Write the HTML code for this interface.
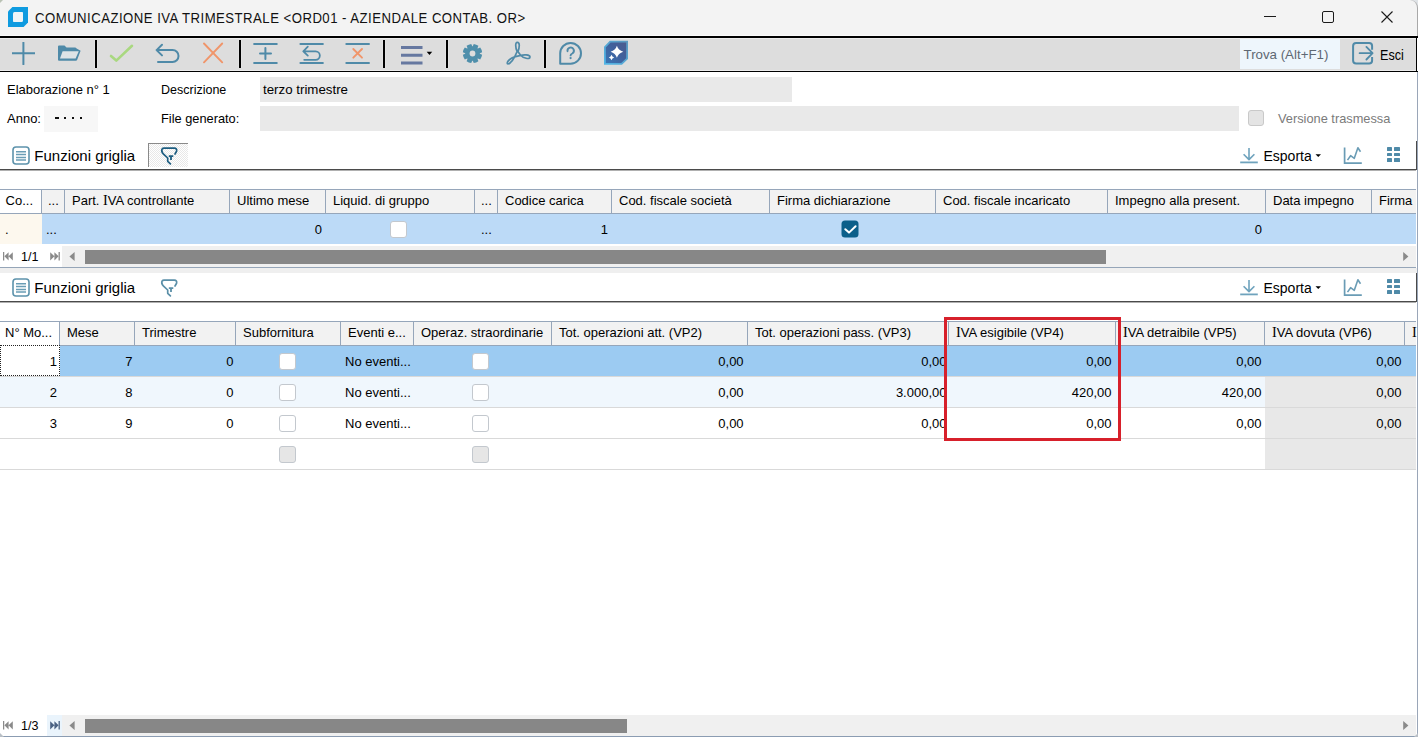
<!DOCTYPE html>
<html><head><meta charset="utf-8"><style>
html,body{margin:0;padding:0;}
body{width:1418px;height:737px;position:relative;overflow:hidden;background:#fff;font-family:"Liberation Sans",sans-serif;}
body>div{position:absolute;box-sizing:content-box;}
.t{white-space:nowrap;line-height:1;}
</style></head><body>
<div style="left:0px;top:0px;width:1418px;height:36px;background:#f3f3f3;"></div>
<div style="left:0px;top:35px;width:1418px;height:1px;background:#fafafa;"></div>
<svg style="position:absolute;left:8px;top:7px;" width="20" height="20" viewBox="0 0 20 20"><path d="M4.4 0H20V15.6L15.6 20H0V4.4Z" fill="#0f9be0"/><path d="M6.5 5H14.2Q15 5 15 5.8V13.5Q15 15 13.5 15H5.8Q5 15 5 14.2V6.5Q5 5 6.5 5Z" fill="#eef5f8"/></svg>
<div class="t" style="left:35.3px;top:10px;font-size:15.5px;color:#111;transform:scaleX(0.85);transform-origin:left top;letter-spacing:0.55px;">COMUNICAZIONE IVA TRIMESTRALE &lt;ORD01 - AZIENDALE CONTAB. OR&gt;</div>
<div style="left:1264px;top:16px;width:12px;height:1px;background:#1a1a1a;"></div>
<div style="left:1322px;top:11px;width:10px;height:10px;border:1px solid #1a1a1a;border-radius:2px;"></div>
<svg style="position:absolute;left:1381px;top:11px;" width="12" height="12" viewBox="0 0 12 12"><path d="M0.5 0.5L11.5 11.5M11.5 0.5L0.5 11.5" stroke="#1a1a1a" stroke-width="1.1"/></svg>
<div style="left:0px;top:36px;width:1418px;height:2px;background:#000;"></div>
<div style="left:0px;top:38px;width:1416px;height:1px;background:#ebebeb;"></div>
<div style="left:0px;top:39px;width:1416px;height:31px;background:#dddddd;"></div>
<div style="left:0px;top:70px;width:1416px;height:1px;background:#ebebeb;"></div>
<div style="left:0px;top:71px;width:1418px;height:1px;background:#000;"></div>
<div style="left:1416px;top:36px;width:1px;height:36px;background:#000;"></div>
<svg style="position:absolute;left:12px;top:42px;" width="23" height="23" viewBox="0 0 23 23"><path d="M11.4 0.5V22.3M0 11.2H22.8" stroke="#4f8aa8" stroke-width="2" stroke-linecap="round"/></svg>
<svg style="position:absolute;left:57px;top:45px;" width="25" height="17" viewBox="0 0 25 17"><path d="M1 1.6Q1 0.6 2 0.6H7.5L9.5 2.6H18Q19 2.6 19.6 3.4L23.6 5.8L20.2 14.8Q19.9 15.8 18.8 15.8H2Q1 15.8 1 14.8Z" fill="#4f8aa8"/><path d="M5.6 6.2H21.8L18.6 13.6H3Z" fill="#dde3e6"/></svg>
<div style="left:94px;top:40px;width:4px;height:28px;background:#e3e3e3;"></div>
<div style="left:95px;top:40px;width:2px;height:28px;background:#000;"></div>
<div style="left:238px;top:40px;width:4px;height:28px;background:#e3e3e3;"></div>
<div style="left:239px;top:40px;width:2px;height:28px;background:#000;"></div>
<div style="left:382px;top:40px;width:4px;height:28px;background:#e3e3e3;"></div>
<div style="left:383px;top:40px;width:2px;height:28px;background:#000;"></div>
<div style="left:445px;top:40px;width:4px;height:28px;background:#e3e3e3;"></div>
<div style="left:446px;top:40px;width:2px;height:28px;background:#000;"></div>
<div style="left:543px;top:40px;width:4px;height:28px;background:#e3e3e3;"></div>
<div style="left:544px;top:40px;width:2px;height:28px;background:#000;"></div>
<svg style="position:absolute;left:108px;top:43px;" width="26" height="21" viewBox="0 0 26 21"><path d="M3 13L8.3 17.6L24 2.8" stroke="#a9d880" stroke-width="2.6" fill="none" stroke-linecap="round" stroke-linejoin="round"/></svg>
<svg style="position:absolute;left:154px;top:43px;" width="28" height="22" viewBox="0 0 28 22"><path d="M8 1.8L2.6 7.1L8 12.4M2.6 7.1H18.6A5.9 5.9 0 0 1 18.6 18.9H4" stroke="#4f8aa8" stroke-width="2" fill="none" stroke-linecap="round" stroke-linejoin="round"/></svg>
<svg style="position:absolute;left:202px;top:42px;" width="22" height="22" viewBox="0 0 22 22"><path d="M2 1.5L20.2 20.3M20.2 1.5L2 20.3" stroke="#f0956a" stroke-width="1.9" stroke-linecap="round"/></svg>
<svg style="position:absolute;left:253px;top:42px;" width="26" height="24" viewBox="0 0 26 24"><path d="M1.2 2H23.7M1.2 21H23.7" stroke="#4f8aa8" stroke-width="2.2" stroke-linecap="round"/><path d="M12.4 6V17M7 11.4H18" stroke="#4f8aa8" stroke-width="2" stroke-linecap="round"/></svg>
<svg style="position:absolute;left:299px;top:42px;" width="26" height="24" viewBox="0 0 26 24"><path d="M1.5 2H23.8M1.5 21H23.8" stroke="#4f8aa8" stroke-width="2.2" stroke-linecap="round"/><path d="M8.8 4.7L4.3 9.3L8.8 13.6M4.3 9.3H16.6A4.2 4.2 0 0 1 16.6 17.8H5.2" stroke="#4f8aa8" stroke-width="1.8" fill="none" stroke-linecap="round" stroke-linejoin="round"/></svg>
<svg style="position:absolute;left:345px;top:42px;" width="26" height="24" viewBox="0 0 26 24"><path d="M1.4 2H23.9M1.4 21H23.9" stroke="#4f8aa8" stroke-width="2.2" stroke-linecap="round"/><path d="M8.3 7L17 15.7M17 7L8.3 15.7" stroke="#f0956a" stroke-width="1.9" stroke-linecap="round"/></svg>
<svg style="position:absolute;left:399px;top:44px;" width="36" height="22" viewBox="0 0 36 22"><path d="M2 3.5H23.5M2 11.3H23.5M2 19H23.5" stroke="#6678a0" stroke-width="3" stroke-linecap="butt"/><path d="M27.7 7.8H33.2L30.45 10.9Z" fill="#000"/></svg>
<svg style="position:absolute;left:462px;top:43px;" width="21" height="21" viewBox="0 0 21 21"><path d="M11.77 0.88A9.7 9.7 0 0 1 16.40 2.80L15.48 5.16L15.84 5.52L18.20 4.60A9.7 9.7 0 0 1 20.12 9.23L17.80 10.25L17.80 10.75L20.12 11.77A9.7 9.7 0 0 1 18.20 16.40L15.84 15.48L15.48 15.84L16.40 18.20A9.7 9.7 0 0 1 11.77 20.12L10.75 17.80L10.25 17.80L9.23 20.12A9.7 9.7 0 0 1 4.60 18.20L5.52 15.84L5.16 15.48L2.80 16.40A9.7 9.7 0 0 1 0.88 11.77L3.20 10.75L3.20 10.25L0.88 9.23A9.7 9.7 0 0 1 2.80 4.60L5.16 5.52L5.52 5.16L4.60 2.80A9.7 9.7 0 0 1 9.23 0.88L10.25 3.20L10.75 3.20Z" fill="#4f8fab"/><circle cx="10.5" cy="10.5" r="2.9" fill="#dddddd"/></svg>
<svg style="position:absolute;left:500px;top:38px;" width="34" height="30" viewBox="0 0 34 30"><path d="M14.8 18.7L17.1 13.5C15.4 9.6 15 4.3 17.4 4.3C19.8 4.3 19.8 9 17.9 13.6L20.6 17.2C23 20 30 22 30 19.1C30 16.2 23 16.6 20.8 17.4L14.6 18.8C10.6 20.2 7.2 23.2 7.2 25C7.2 27.2 11.4 25.4 14.8 18.7Z" stroke="#4f8aa8" stroke-width="1.7" fill="none" stroke-linejoin="round"/></svg>
<svg style="position:absolute;left:557px;top:41px;" width="26" height="25" viewBox="0 0 26 25"><path d="M3.2 22.7V12.3A10.4 10.4 0 1 1 13.6 22.7Z" stroke="#4f8aa8" stroke-width="2" fill="none" stroke-linejoin="round"/><path d="M10.5 10.2A3.2 3.2 0 1 1 15.3 12.5Q13.6 13.3 13.6 14.4" stroke="#4f8aa8" stroke-width="1.9" fill="none" stroke-linecap="round"/><circle cx="13.6" cy="17.1" r="1.15" fill="#4f8aa8"/></svg>
<svg style="position:absolute;left:603px;top:40px;" width="26" height="26" viewBox="0 0 26 26"><defs><linearGradient id="g1" x1="0" y1="1" x2="1" y2="0"><stop offset="0" stop-color="#3a78b8"/><stop offset="0.55" stop-color="#41609c"/><stop offset="1" stop-color="#4d5a8c"/></linearGradient><linearGradient id="g2" x1="0" y1="1" x2="1" y2="0"><stop offset="0" stop-color="#52b6e6"/><stop offset="1" stop-color="#5b98c0"/></linearGradient></defs><path d="M7.2 1.7H24.1V18.6L18.6 23.9H1.9V7.2Z" fill="url(#g1)" stroke="url(#g2)" stroke-width="1.8"/><path d="M13.9 5.7Q15.3 10.3 20.3 11.7Q15.3 13.1 13.9 17.8Q12.5 13.1 7.6 11.7Q12.5 10.3 13.9 5.7Z" fill="#fff"/><path d="M8.5 14.8Q9.1 16.9 11.2 17.5Q9.1 18.1 8.5 20.2Q7.9 18.1 5.8 17.5Q7.9 16.9 8.5 14.8Z" fill="#fff"/></svg>
<div style="left:1240px;top:39px;width:100px;height:30px;background:#eef6fc;"></div>
<div class="t" style="left:1243.5px;top:48px;font-size:13.3px;color:#5e6873;">Trova (Alt+F1)</div>
<svg style="position:absolute;left:1350px;top:41px;" width="26" height="25" viewBox="0 0 26 25"><path d="M22.1 8.7V5.1Q22.1 2.1 19.1 2.1H6.1Q3.1 2.1 3.1 5.1V19.5Q3.1 22.5 6.1 22.5H19.1Q22.1 22.5 22.1 19.5V16.1" stroke="#4f8aa8" stroke-width="2" fill="none"/><path d="M9.6 12.2H22M16.4 5.9L22.6 12.2L16.4 18.5" stroke="#4f8aa8" stroke-width="1.8" fill="none" stroke-linecap="round" stroke-linejoin="round"/></svg>
<div class="t" style="left:1379.5px;top:47px;font-size:15px;color:#000;transform:scaleX(0.84);transform-origin:left top;">Esci</div>
<div class="t" style="left:7px;top:83px;font-size:13px;color:#000;">Elaborazione n° 1</div>
<div class="t" style="left:161px;top:84px;font-size:12.5px;color:#000;">Descrizione</div>
<div style="left:260px;top:77px;width:532px;height:25px;background:#e9e9e9;"></div>
<div class="t" style="left:263px;top:83px;font-size:13.3px;color:#000;">terzo trimestre</div>
<div class="t" style="left:7px;top:112px;font-size:13px;color:#000;">Anno:</div>
<div style="left:44px;top:106px;width:54px;height:26px;background:#f7f7f7;"></div>
<div style="left:55px;top:117px;width:3.6px;height:2px;background:#111;"></div>
<div style="left:64px;top:117px;width:2px;height:2px;background:#111;"></div>
<div style="left:72px;top:117px;width:2px;height:2px;background:#111;"></div>
<div style="left:80px;top:117px;width:2px;height:2px;background:#111;"></div>
<div class="t" style="left:161px;top:113px;font-size:12.8px;color:#000;">File generato:</div>
<div style="left:260px;top:106px;width:979px;height:25px;background:#e9e9e9;"></div>
<div style="left:1248px;top:110px;width:14px;height:14px;border:1.5px solid #c9c9c9;border-radius:3px;background:#e4e4e4;"></div>
<div class="t" style="left:1278px;top:113px;font-size:12.8px;color:#7a7a7a;">Versione trasmessa</div>
<svg style="position:absolute;left:12px;top:146px;" width="19" height="19" viewBox="0 0 19 19"><rect x="1" y="1" width="16" height="17" rx="3" stroke="#5d93ac" stroke-width="1.6" fill="#fff"/><path d="M4 5.8H14M4 8.5H14M4 11.4H14M4 14H14" stroke="#6a9db5" stroke-width="1.5"/></svg>
<div class="t" style="left:34.3px;top:148px;font-size:15px;color:#000;">Funzioni griglia</div>
<div style="left:148px;top:143px;width:39px;height:23px;border-left:1px solid #8a8a8a;border-top:1px solid #8a8a8a;background:repeating-conic-gradient(#e8e8e8 0 25%, #ffffff 0 50%) 0 0/2px 2px;"></div>
<svg style="position:absolute;left:159px;top:147px;" width="20" height="20" viewBox="0 0 20 20"><path d="M2.8 4.2Q2.4 1.2 5 1.2H15.4Q18.2 1.2 17.6 4.2L16 7" stroke="#1d5d80" stroke-width="1.7" fill="none" stroke-linecap="round"/><path d="M2.8 4.2Q3 5.6 4.3 6.8L8.7 11V14.3L11.4 16.8" stroke="#1d5d80" stroke-width="1.7" fill="none" stroke-linecap="round" stroke-linejoin="round"/><path d="M9.8 9.2H14.3M12 9.2V13" stroke="#1d5d80" stroke-width="1.8"/></svg>
<div style="left:0px;top:169px;width:1417px;height:1px;background:#4a4a4a;"></div>
<div style="left:1416px;top:141px;width:1px;height:28px;background:#4a4a4a;"></div>
<div style="left:0px;top:170px;width:1416px;height:1px;background:#b0b0b0;"></div>
<svg style="position:absolute;left:1239px;top:147px;" width="20" height="18" viewBox="0 0 20 18"><path d="M10 1V12.4M4.6 7.2L10 12.6L15.4 7.2" stroke="#6fa3bd" stroke-width="1.6" fill="none" stroke-linejoin="round"/><path d="M1.2 15.4H18.8" stroke="#6fa3bd" stroke-width="1.8"/></svg>
<div class="t" style="left:1263.5px;top:149px;font-size:14px;color:#000;">Esporta</div>
<svg style="position:absolute;left:1315px;top:154px;" width="7" height="4" viewBox="0 0 7 4"><path d="M0.5 0.3H6L3.25 3Z" fill="#000"/></svg>
<svg style="position:absolute;left:1343px;top:146px;" width="20" height="19" viewBox="0 0 20 19"><path d="M1.6 1.5V17.2H18.8" stroke="#6a9cb5" stroke-width="1.7" fill="none"/><path d="M4.5 14.1L7.6 9.7L11.3 12.3L14.9 1.8L17.5 5.7" stroke="#6a9cb5" stroke-width="1.6" fill="none" stroke-linejoin="round"/></svg>
<div style="left:1387px;top:147px;width:5.2px;height:3.6px;background:#4f8aa8;border-radius:0.6px;"></div>
<div style="left:1394.2px;top:147px;width:5.8px;height:3.6px;background:#4f8aa8;border-radius:0.6px;"></div>
<div style="left:1387px;top:152.6px;width:5.2px;height:3.6px;background:#4f8aa8;border-radius:0.6px;"></div>
<div style="left:1394.2px;top:152.6px;width:5.8px;height:3.6px;background:#4f8aa8;border-radius:0.6px;"></div>
<div style="left:1387px;top:158.2px;width:5.2px;height:3.6px;background:#4f8aa8;border-radius:0.6px;"></div>
<div style="left:1394.2px;top:158.2px;width:5.8px;height:3.6px;background:#4f8aa8;border-radius:0.6px;"></div>
<svg style="position:absolute;left:12px;top:278px;" width="19" height="19" viewBox="0 0 19 19"><rect x="1" y="1" width="16" height="17" rx="3" stroke="#5d93ac" stroke-width="1.6" fill="#fff"/><path d="M4 5.8H14M4 8.5H14M4 11.4H14M4 14H14" stroke="#6a9db5" stroke-width="1.5"/></svg>
<div class="t" style="left:34.3px;top:280px;font-size:15px;color:#000;">Funzioni griglia</div>
<svg style="position:absolute;left:159px;top:279px;" width="20" height="20" viewBox="0 0 20 20"><path d="M2.8 4.2Q2.4 1.2 5 1.2H15.4Q18.2 1.2 17.6 4.2L16 7" stroke="#5a8fa8" stroke-width="1.7" fill="none" stroke-linecap="round"/><path d="M2.8 4.2Q3 5.6 4.3 6.8L8.7 11V14.3L11.4 16.8" stroke="#5a8fa8" stroke-width="1.7" fill="none" stroke-linecap="round" stroke-linejoin="round"/><path d="M9.8 9.2H14.3M12 9.2V13" stroke="#5a8fa8" stroke-width="1.8"/></svg>
<div style="left:0px;top:301px;width:1417px;height:1px;background:#4a4a4a;"></div>
<div style="left:1416px;top:273px;width:1px;height:28px;background:#4a4a4a;"></div>
<div style="left:0px;top:302px;width:1416px;height:1px;background:#b0b0b0;"></div>
<svg style="position:absolute;left:1239px;top:279px;" width="20" height="18" viewBox="0 0 20 18"><path d="M10 1V12.4M4.6 7.2L10 12.6L15.4 7.2" stroke="#6fa3bd" stroke-width="1.6" fill="none" stroke-linejoin="round"/><path d="M1.2 15.4H18.8" stroke="#6fa3bd" stroke-width="1.8"/></svg>
<div class="t" style="left:1263.5px;top:281px;font-size:14px;color:#000;">Esporta</div>
<svg style="position:absolute;left:1315px;top:286px;" width="7" height="4" viewBox="0 0 7 4"><path d="M0.5 0.3H6L3.25 3Z" fill="#000"/></svg>
<svg style="position:absolute;left:1343px;top:278px;" width="20" height="19" viewBox="0 0 20 19"><path d="M1.6 1.5V17.2H18.8" stroke="#6a9cb5" stroke-width="1.7" fill="none"/><path d="M4.5 14.1L7.6 9.7L11.3 12.3L14.9 1.8L17.5 5.7" stroke="#6a9cb5" stroke-width="1.6" fill="none" stroke-linejoin="round"/></svg>
<div style="left:1387px;top:279px;width:5.2px;height:3.6px;background:#4f8aa8;border-radius:0.6px;"></div>
<div style="left:1394.2px;top:279px;width:5.8px;height:3.6px;background:#4f8aa8;border-radius:0.6px;"></div>
<div style="left:1387px;top:284.6px;width:5.2px;height:3.6px;background:#4f8aa8;border-radius:0.6px;"></div>
<div style="left:1394.2px;top:284.6px;width:5.8px;height:3.6px;background:#4f8aa8;border-radius:0.6px;"></div>
<div style="left:1387px;top:290.2px;width:5.2px;height:3.6px;background:#4f8aa8;border-radius:0.6px;"></div>
<div style="left:1394.2px;top:290.2px;width:5.8px;height:3.6px;background:#4f8aa8;border-radius:0.6px;"></div>
<div style="left:0px;top:268px;width:1417px;height:5px;background:#efefef;"></div>
<div style="left:0px;top:189px;width:1416px;height:1px;background:#96a6ba;"></div>
<div style="left:0px;top:190px;width:1416px;height:23px;background:#f2f2f2;"></div>
<div style="left:0px;top:190px;width:41px;height:23px;background:#ffffff;"></div>
<div style="left:0px;top:213px;width:1416px;height:1px;background:#96a6ba;"></div>
<div style="left:41px;top:190px;width:1px;height:23px;background:#96a6ba;"></div>
<div style="left:64px;top:190px;width:1px;height:23px;background:#96a6ba;"></div>
<div style="left:229px;top:190px;width:1px;height:23px;background:#96a6ba;"></div>
<div style="left:325px;top:190px;width:1px;height:23px;background:#96a6ba;"></div>
<div style="left:474px;top:190px;width:1px;height:23px;background:#96a6ba;"></div>
<div style="left:497px;top:190px;width:1px;height:23px;background:#96a6ba;"></div>
<div style="left:611px;top:190px;width:1px;height:23px;background:#96a6ba;"></div>
<div style="left:769px;top:190px;width:1px;height:23px;background:#96a6ba;"></div>
<div style="left:935px;top:190px;width:1px;height:23px;background:#96a6ba;"></div>
<div style="left:1107px;top:190px;width:1px;height:23px;background:#96a6ba;"></div>
<div style="left:1265px;top:190px;width:1px;height:23px;background:#96a6ba;"></div>
<div style="left:1371px;top:190px;width:1px;height:23px;background:#96a6ba;"></div>
<div class="t" style="left:5.6px;top:194px;font-size:13px;color:#000;">Co...</div>
<div class="t" style="left:48px;top:194px;font-size:13px;color:#000;">...</div>
<div class="t" style="left:72px;top:194px;font-size:13px;color:#000;">Part. <span style="font-family:'Liberation Serif',serif;font-size:14.3px;line-height:0;">I</span>VA controllante</div>
<div class="t" style="left:237px;top:194px;font-size:13px;color:#000;">Ultimo mese</div>
<div class="t" style="left:333px;top:194px;font-size:13px;color:#000;">Liquid. di gruppo</div>
<div class="t" style="left:481px;top:194px;font-size:13px;color:#000;">...</div>
<div class="t" style="left:505px;top:194px;font-size:13px;color:#000;">Codice carica</div>
<div class="t" style="left:619px;top:194px;font-size:13px;color:#000;">Cod. fiscale società</div>
<div class="t" style="left:777px;top:194px;font-size:13px;color:#000;">Firma dichiarazione</div>
<div class="t" style="left:943px;top:194px;font-size:13px;color:#000;">Cod. fiscale incaricato</div>
<div class="t" style="left:1115px;top:194px;font-size:13px;color:#000;">Impegno alla present.</div>
<div class="t" style="left:1273px;top:194px;font-size:13px;color:#000;">Data impegno</div>
<div class="t" style="left:1379px;top:194px;font-size:13px;color:#000;">Firma</div>
<div style="left:0px;top:214px;width:1416px;height:30px;background:#bcdaf7;"></div>
<div style="left:0px;top:214px;width:42px;height:30px;background:#fdf8ee;"></div>
<div class="t" style="left:5px;top:223px;font-size:13px;color:#000;">.</div>
<div class="t" style="left:46px;top:223px;font-size:13px;color:#000;">...</div>
<div class="t" style="right:1096px;top:223px;font-size:13px;color:#000;text-align:right;">0</div>
<div class="t" style="left:481px;top:223px;font-size:13px;color:#000;">...</div>
<div class="t" style="right:810px;top:223px;font-size:13px;color:#000;text-align:right;">1</div>
<div class="t" style="right:156px;top:223px;font-size:13px;color:#000;text-align:right;">0</div>
<div style="left:390px;top:221px;width:15px;height:15px;border:1.5px solid #c3c8ce;border-radius:3px;background:#fff;"></div>
<svg style="position:absolute;left:841px;top:220px;" width="18" height="18" viewBox="0 0 18 18"><rect x="0.5" y="0.5" width="17" height="17" rx="3.5" fill="#0b5f8a"/><path d="M4.3 9.2L8 12.6L14.6 6.2" stroke="#fff" stroke-width="2" fill="none" stroke-linecap="round" stroke-linejoin="round"/></svg>
<div style="left:0px;top:244px;width:1416px;height:2px;background:#ffffff;"></div>
<div style="left:0px;top:246px;width:62px;height:21px;background:#ffffff;"></div>
<div style="left:62px;top:246px;width:1354px;height:21px;background:#f0f0f0;"></div>
<svg style="position:absolute;left:3px;top:252px;" width="10" height="9" viewBox="0 0 10 9"><path d="M0.6 0V8.6" stroke="#8a8a8a" stroke-width="1.3"/><path d="M5.6 0.2V8.4L1.4 4.3Z M9.8 0.2V8.4L5.6 4.3Z" fill="#8a8a8a"/></svg>
<div class="t" style="left:21px;top:251px;font-size:12.5px;color:#000;">1/1</div>
<svg style="position:absolute;left:50px;top:252px;" width="10" height="9" viewBox="0 0 10 9"><path d="M9.2 0V8.6" stroke="#8a8a8a" stroke-width="1.3"/><path d="M0.2 0.2V8.4L4.4 4.3Z M4.4 0.2V8.4L8.6 4.3Z" fill="#8a8a8a"/></svg>
<svg style="position:absolute;left:69px;top:252px;" width="6" height="9" viewBox="0 0 6 9"><path d="M5.6 0V9L0.4 4.5Z" fill="#8a8a8a"/></svg>
<div style="left:85px;top:250px;width:1021px;height:14px;background:#878787;"></div>
<svg style="position:absolute;left:1403px;top:252px;" width="6" height="9" viewBox="0 0 6 9"><path d="M0.2 0V9L5.4 4.5Z" fill="#8a8a8a"/></svg>
<div style="left:0px;top:267px;width:1416px;height:1px;background:#95a5b8;"></div>
<div style="left:0px;top:321px;width:1416px;height:1px;background:#96a6ba;"></div>
<div style="left:0px;top:322px;width:1416px;height:23px;background:#f2f2f2;"></div>
<div style="left:0px;top:322px;width:59px;height:23px;background:#ffffff;"></div>
<div style="left:0px;top:345px;width:1416px;height:1px;background:#96a6ba;"></div>
<div style="left:59px;top:322px;width:1px;height:23px;background:#96a6ba;"></div>
<div style="left:134px;top:322px;width:1px;height:23px;background:#96a6ba;"></div>
<div style="left:235px;top:322px;width:1px;height:23px;background:#96a6ba;"></div>
<div style="left:340px;top:322px;width:1px;height:23px;background:#96a6ba;"></div>
<div style="left:413px;top:322px;width:1px;height:23px;background:#96a6ba;"></div>
<div style="left:551px;top:322px;width:1px;height:23px;background:#96a6ba;"></div>
<div style="left:747px;top:322px;width:1px;height:23px;background:#96a6ba;"></div>
<div style="left:948px;top:322px;width:1px;height:23px;background:#96a6ba;"></div>
<div style="left:1115px;top:322px;width:1px;height:23px;background:#96a6ba;"></div>
<div style="left:1264px;top:322px;width:1px;height:23px;background:#96a6ba;"></div>
<div style="left:1404px;top:322px;width:1px;height:23px;background:#96a6ba;"></div>
<div class="t" style="left:5px;top:326px;font-size:13px;color:#000;">N° Mo...</div>
<div class="t" style="left:67px;top:326px;font-size:13px;color:#000;">Mese</div>
<div class="t" style="left:142px;top:326px;font-size:13px;color:#000;">Trimestre</div>
<div class="t" style="left:243px;top:326px;font-size:13px;color:#000;">Subfornitura</div>
<div class="t" style="left:348px;top:326px;font-size:13px;color:#000;">Eventi e...</div>
<div class="t" style="left:421px;top:326px;font-size:13px;color:#000;">Operaz. straordinarie</div>
<div class="t" style="left:559px;top:326px;font-size:13px;color:#000;">Tot. operazioni att. (VP2)</div>
<div class="t" style="left:755px;top:326px;font-size:13px;color:#000;">Tot. operazioni pass. (VP3)</div>
<div class="t" style="left:956px;top:326px;font-size:13px;color:#000;"><span style="font-family:'Liberation Serif',serif;font-size:14.3px;line-height:0;">I</span>VA esigibile (VP4)</div>
<div class="t" style="left:1123px;top:326px;font-size:13px;color:#000;"><span style="font-family:'Liberation Serif',serif;font-size:14.3px;line-height:0;">I</span>VA detraibile (VP5)</div>
<div class="t" style="left:1272px;top:326px;font-size:13px;color:#000;"><span style="font-family:'Liberation Serif',serif;font-size:14.3px;line-height:0;">I</span>VA dovuta (VP6)</div>
<div class="t" style="left:1412px;top:326px;font-size:13px;color:#000;"><span style="font-family:'Liberation Serif',serif;font-size:14.3px;line-height:0;">I</span></div>
<div style="left:0px;top:346px;width:1416px;height:30px;background:#9ccbf2;"></div>
<div style="left:0px;top:376px;width:1416px;height:1px;background:#d9d9d9;"></div>
<div style="left:0px;top:377px;width:1416px;height:30px;background:#f0f7fd;"></div>
<div style="left:0px;top:407px;width:1416px;height:1px;background:#d9d9d9;"></div>
<div style="left:1265px;top:377px;width:151px;height:30px;background:#e8e8e8;"></div>
<div style="left:0px;top:408px;width:1416px;height:30px;background:#ffffff;"></div>
<div style="left:0px;top:438px;width:1416px;height:1px;background:#d9d9d9;"></div>
<div style="left:1265px;top:408px;width:151px;height:30px;background:#e8e8e8;"></div>
<div style="left:0px;top:439px;width:1416px;height:30px;background:#ffffff;"></div>
<div style="left:0px;top:469px;width:1416px;height:1px;background:#d9d9d9;"></div>
<div style="left:1265px;top:439px;width:151px;height:30px;background:#e8e8e8;"></div>
<div style="left:0px;top:345px;width:58px;height:29px;border:1px dotted #222;background:#fff;"></div>
<div class="t" style="right:1361px;top:355px;font-size:13px;color:#000;text-align:right;">1</div>
<div class="t" style="right:1285.5px;top:355px;font-size:13px;color:#000;text-align:right;">7</div>
<div class="t" style="right:1184.5px;top:355px;font-size:13px;color:#000;text-align:right;">0</div>
<div class="t" style="left:345px;top:355px;font-size:13px;color:#000;">No eventi...</div>
<div class="t" style="right:674.4px;top:355px;font-size:13px;color:#000;text-align:right;">0,00</div>
<div class="t" style="right:471.5px;top:355px;font-size:13px;color:#000;text-align:right;">0,00</div>
<div class="t" style="right:306.5px;top:355px;font-size:13px;color:#000;text-align:right;">0,00</div>
<div class="t" style="right:156.5px;top:355px;font-size:13px;color:#000;text-align:right;">0,00</div>
<div class="t" style="right:16.5px;top:355px;font-size:13px;color:#000;text-align:right;">0,00</div>
<div class="t" style="right:1361px;top:386px;font-size:13px;color:#000;text-align:right;">2</div>
<div class="t" style="right:1285.5px;top:386px;font-size:13px;color:#000;text-align:right;">8</div>
<div class="t" style="right:1184.5px;top:386px;font-size:13px;color:#000;text-align:right;">0</div>
<div class="t" style="left:345px;top:386px;font-size:13px;color:#000;">No eventi...</div>
<div class="t" style="right:674.4px;top:386px;font-size:13px;color:#000;text-align:right;">0,00</div>
<div class="t" style="right:471.5px;top:386px;font-size:13px;color:#000;text-align:right;">3.000,00</div>
<div class="t" style="right:306.5px;top:386px;font-size:13px;color:#000;text-align:right;">420,00</div>
<div class="t" style="right:156.5px;top:386px;font-size:13px;color:#000;text-align:right;">420,00</div>
<div class="t" style="right:16.5px;top:386px;font-size:13px;color:#000;text-align:right;">0,00</div>
<div class="t" style="right:1361px;top:417px;font-size:13px;color:#000;text-align:right;">3</div>
<div class="t" style="right:1285.5px;top:417px;font-size:13px;color:#000;text-align:right;">9</div>
<div class="t" style="right:1184.5px;top:417px;font-size:13px;color:#000;text-align:right;">0</div>
<div class="t" style="left:345px;top:417px;font-size:13px;color:#000;">No eventi...</div>
<div class="t" style="right:674.4px;top:417px;font-size:13px;color:#000;text-align:right;">0,00</div>
<div class="t" style="right:471.5px;top:417px;font-size:13px;color:#000;text-align:right;">0,00</div>
<div class="t" style="right:306.5px;top:417px;font-size:13px;color:#000;text-align:right;">0,00</div>
<div class="t" style="right:156.5px;top:417px;font-size:13px;color:#000;text-align:right;">0,00</div>
<div class="t" style="right:16.5px;top:417px;font-size:13px;color:#000;text-align:right;">0,00</div>
<div style="left:279px;top:353px;width:15px;height:15px;border:1.5px solid #c3c8ce;border-radius:3px;background:#fff;"></div>
<div style="left:472px;top:353px;width:15px;height:15px;border:1.5px solid #c3c8ce;border-radius:3px;background:#fff;"></div>
<div style="left:279px;top:384px;width:15px;height:15px;border:1.5px solid #c3c8ce;border-radius:3px;background:#fff;"></div>
<div style="left:472px;top:384px;width:15px;height:15px;border:1.5px solid #c3c8ce;border-radius:3px;background:#fff;"></div>
<div style="left:279px;top:415px;width:15px;height:15px;border:1.5px solid #c3c8ce;border-radius:3px;background:#fff;"></div>
<div style="left:472px;top:415px;width:15px;height:15px;border:1.5px solid #c3c8ce;border-radius:3px;background:#fff;"></div>
<div style="left:279px;top:446px;width:15px;height:15px;border:1.5px solid #c3c8ce;border-radius:3px;background:#e6e6e6;"></div>
<div style="left:472px;top:446px;width:15px;height:15px;border:1.5px solid #c3c8ce;border-radius:3px;background:#e6e6e6;"></div>
<div style="left:944px;top:317px;width:171px;height:118px;border:3px solid #d7202b;"></div>
<div style="left:0px;top:715px;width:62px;height:21px;background:#ffffff;"></div>
<div style="left:62px;top:715px;width:1354px;height:21px;background:#f0f0f0;"></div>
<div style="left:47px;top:715px;width:15px;height:21px;background:#eaf4fc;"></div>
<svg style="position:absolute;left:3px;top:721px;" width="10" height="9" viewBox="0 0 10 9"><path d="M0.6 0V8.6" stroke="#8a8a8a" stroke-width="1.3"/><path d="M5.6 0.2V8.4L1.4 4.3Z M9.8 0.2V8.4L5.6 4.3Z" fill="#8a8a8a"/></svg>
<div class="t" style="left:21px;top:720px;font-size:12.5px;color:#000;">1/3</div>
<svg style="position:absolute;left:50px;top:721px;" width="10" height="9" viewBox="0 0 10 9"><path d="M9.2 0V8.6" stroke="#4b6283" stroke-width="1.3"/><path d="M0.2 0.2V8.4L4.4 4.3Z M4.4 0.2V8.4L8.6 4.3Z" fill="#4b6283"/></svg>
<svg style="position:absolute;left:69px;top:721px;" width="6" height="9" viewBox="0 0 6 9"><path d="M5.6 0V9L0.4 4.5Z" fill="#8a8a8a"/></svg>
<div style="left:85px;top:719px;width:542px;height:14px;background:#878787;"></div>
<svg style="position:absolute;left:1403px;top:721px;" width="6" height="9" viewBox="0 0 6 9"><path d="M0.2 0V9L5.4 4.5Z" fill="#8a8a8a"/></svg>
<div style="left:0px;top:736px;width:1418px;height:1px;background:#8b9cb2;"></div>
<div style="left:1417px;top:72px;width:1px;height:665px;background:#9aa6b8;"></div>
<div style="left:1406px;top:0px;width:12px;height:12px;background:#dfe3e7;"><div style="position:absolute;left:0;top:0;width:11px;height:12px;background:#f3f3f3;border-right:1px solid #a8a8a8;border-top-right-radius:8px;"></div></div>
<div style="left:1417px;top:12px;width:1px;height:24px;background:#a8a8a8;"></div>
<svg style="position:absolute;left:0px;top:0px;" width="5" height="5" viewBox="0 0 5 5"><path d="M0 0H3L0 3Z" fill="#b9c2b4"/></svg>
<svg style="position:absolute;left:0px;top:732px;" width="5" height="5" viewBox="0 0 5 5"><path d="M0 1V5H4Z" fill="#b9bfc6"/></svg>
<svg style="position:absolute;left:1413px;top:732px;" width="5" height="5" viewBox="0 0 5 5"><path d="M5 1V5H1Z" fill="#b9bfc6"/></svg>
</body></html>
